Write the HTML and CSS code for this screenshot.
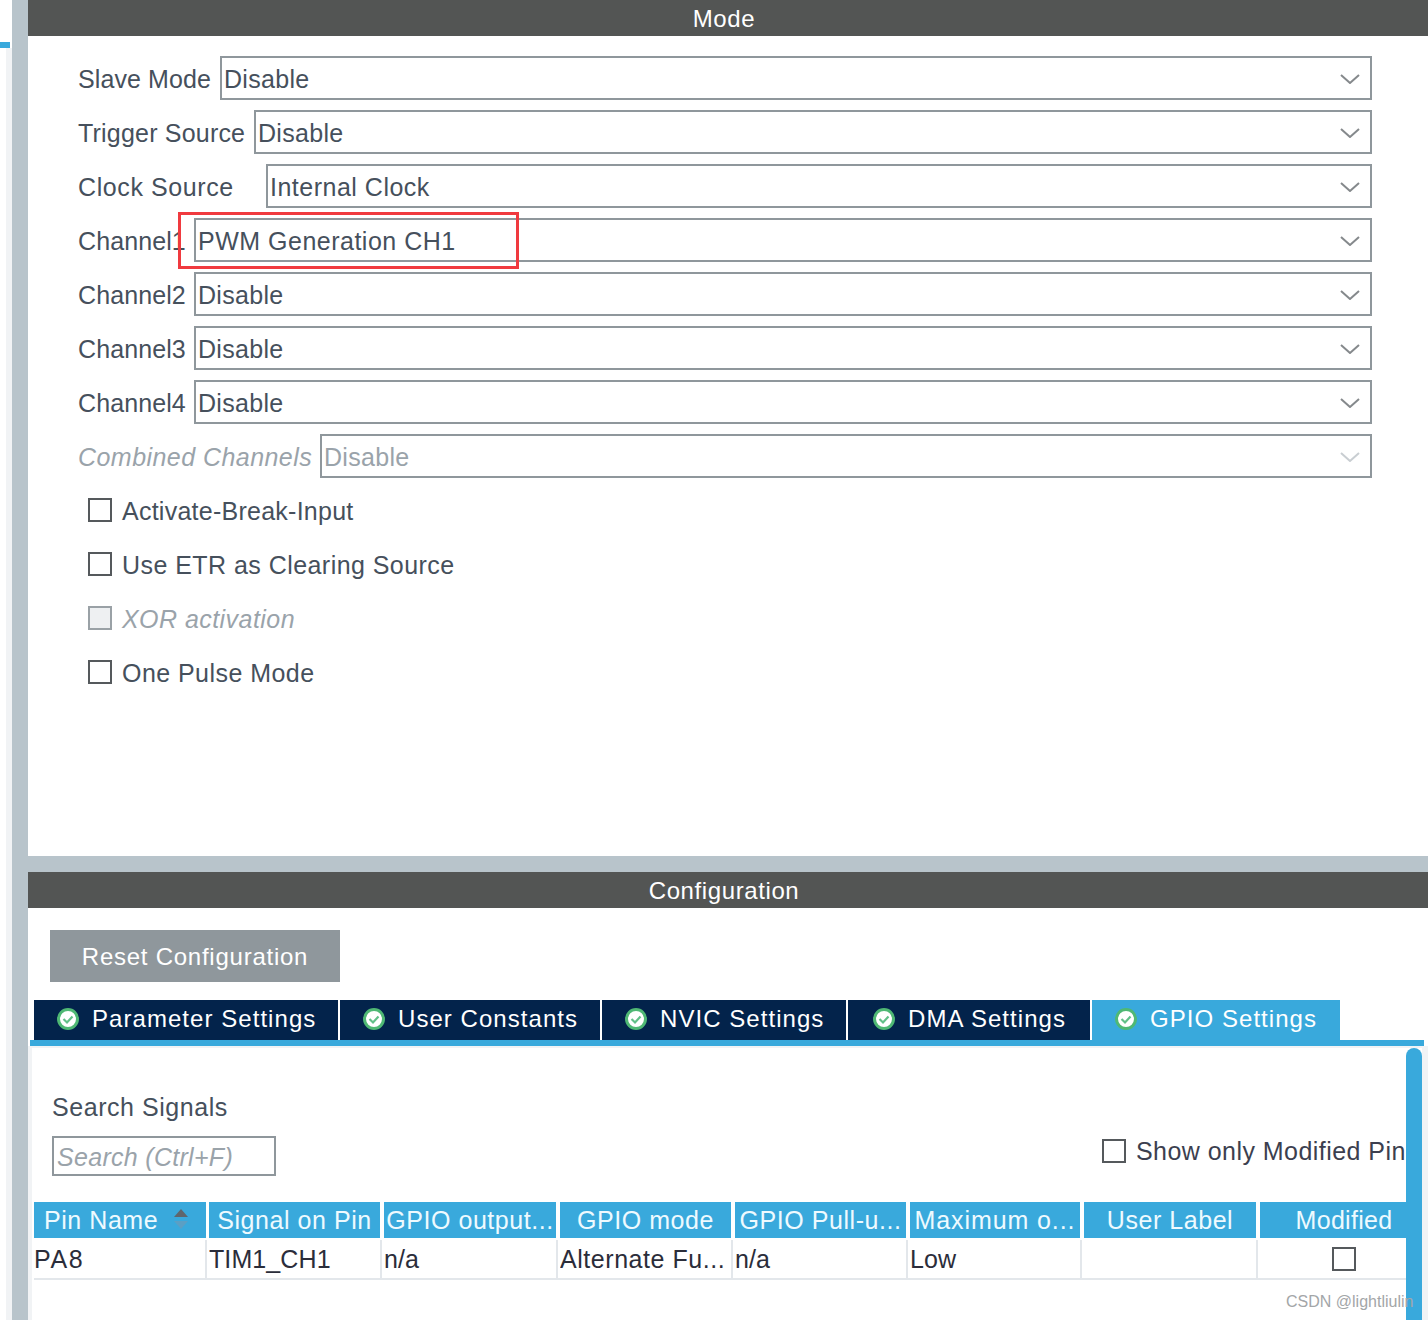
FILE: index.html
```html
<!DOCTYPE html>
<html lang="en">
<head>
    <meta charset="UTF-8">
    <title>TIM1 Mode and Configuration</title>
    <link rel="stylesheet" href="styles.css">
</head>
<body>
    <div class="rail">
        <div class="rail-left">
            <div class="rail-tab"></div>
            <div class="rail-strip"></div>
        </div>
        <div class="rail-sash"></div>
    </div>
    <div class="main">
        <section class="mode">
            <div class="title-bar">Mode</div>
            <div class="mode-body">
                <div class="field">
                    <label class="label w-slave">Slave Mode</label>
                    <div class="select"><span>Disable</span>
                        <svg class="chevron" viewBox="0 0 20 10"><path d="M1 1l9 8 9-8"/></svg>
                    </div>
                </div>
                <div class="field">
                    <label class="label w-trigger">Trigger Source</label>
                    <div class="select"><span>Disable</span>
                        <svg class="chevron" viewBox="0 0 20 10"><path d="M1 1l9 8 9-8"/></svg>
                    </div>
                </div>
                <div class="field">
                    <label class="label w-clock">Clock Source</label>
                    <div class="select"><span class="wide">Internal Clock</span>
                        <svg class="chevron" viewBox="0 0 20 10"><path d="M1 1l9 8 9-8"/></svg>
                    </div>
                </div>
                <div class="field">
                    <label class="label w-channel">Channel1</label>
                    <div class="select"><span class="wide">PWM Generation CH1</span>
                        <svg class="chevron" viewBox="0 0 20 10"><path d="M1 1l9 8 9-8"/></svg>
                    </div>
                    <div class="red-box"></div>
                </div>
                <div class="field">
                    <label class="label w-channel">Channel2</label>
                    <div class="select"><span>Disable</span>
                        <svg class="chevron" viewBox="0 0 20 10"><path d="M1 1l9 8 9-8"/></svg>
                    </div>
                </div>
                <div class="field">
                    <label class="label w-channel">Channel3</label>
                    <div class="select"><span>Disable</span>
                        <svg class="chevron" viewBox="0 0 20 10"><path d="M1 1l9 8 9-8"/></svg>
                    </div>
                </div>
                <div class="field">
                    <label class="label w-channel">Channel4</label>
                    <div class="select"><span>Disable</span>
                        <svg class="chevron" viewBox="0 0 20 10"><path d="M1 1l9 8 9-8"/></svg>
                    </div>
                </div>
                <div class="field disabled">
                    <label class="label w-combined">Combined Channels</label>
                    <div class="select"><span>Disable</span>
                        <svg class="chevron" viewBox="0 0 20 10"><path d="M1 1l9 8 9-8"/></svg>
                    </div>
                </div>
                <div class="check-row tight"><span class="box"></span><span class="check-text">Activate-Break-Input</span></div>
                <div class="check-row"><span class="box"></span><span class="check-text">Use ETR as Clearing Source</span></div>
                <div class="check-row disabled"><span class="box"></span><span class="check-text">XOR activation</span></div>
                <div class="check-row"><span class="box"></span><span class="check-text">One Pulse Mode</span></div>
            </div>
        </section>

        <div class="sash"></div>

        <section class="config">
            <div class="title-bar">Configuration</div>
            <div class="config-body">
                <button class="reset-btn">Reset Configuration</button>
                <div class="tabs">
                    <div class="tab w1"><svg class="ok" viewBox="0 0 22 22"><circle cx="11" cy="11" r="9.5"/><path d="M6.5 11l3.5 3.5 5.5-6"/></svg>Parameter Settings</div>
                    <div class="tab w2"><svg class="ok" viewBox="0 0 22 22"><circle cx="11" cy="11" r="9.5"/><path d="M6.5 11l3.5 3.5 5.5-6"/></svg>User Constants</div>
                    <div class="tab w3"><svg class="ok" viewBox="0 0 22 22"><circle cx="11" cy="11" r="9.5"/><path d="M6.5 11l3.5 3.5 5.5-6"/></svg>NVIC Settings</div>
                    <div class="tab w4"><svg class="ok" viewBox="0 0 22 22"><circle cx="11" cy="11" r="9.5"/><path d="M6.5 11l3.5 3.5 5.5-6"/></svg>DMA Settings</div>
                    <div class="tab w5 active"><svg class="ok" viewBox="0 0 22 22"><circle cx="11" cy="11" r="9.5"/><path d="M6.5 11l3.5 3.5 5.5-6"/></svg>GPIO Settings</div>
                </div>
                <div class="tab-line"></div>
                <div class="tab-content">
                    <div class="gpio">
                        <div class="search-label">Search Signals</div>
                        <div class="search-row">
                            <div class="search-input">Search (Ctrl+F)</div>
                            <div class="modified-check"><span class="box"></span><span>Show only Modified Pin</span></div>
                        </div>
                        <div class="grid">
                            <div class="head sort">Pin Name
                                <svg class="sort-icon" viewBox="0 0 16 22"><path class="up" d="M8 1l7 8H1z"/><path class="down" d="M1 13h14l-7 8z"/></svg>
                            </div>
                            <div class="head">Signal on Pin</div>
                            <div class="head">GPIO output...</div>
                            <div class="head">GPIO mode</div>
                            <div class="head">GPIO Pull-u...</div>
                            <div class="head long">Maximum o...</div>
                            <div class="head">User Label</div>
                            <div class="head last">Modified</div>
                            <div class="cell pin">PA8</div>
                            <div class="cell">TIM1_CH1</div>
                            <div class="cell">n/a</div>
                            <div class="cell mode-cell">Alternate Fu...</div>
                            <div class="cell">n/a</div>
                            <div class="cell">Low</div>
                            <div class="cell"></div>
                            <div class="cell center"><span class="box"></span></div>
                        </div>
                    </div>
                    <div class="scrollbar"></div>
                </div>
            </div>
        </section>
    </div>
    <div class="watermark">CSDN @lightliulin</div>
</body>
</html>
```

FILE: styles.css
```css
html, body {
    margin: 0;
    height: 1320px;
    overflow: hidden;
}
body {
    display: flex;
    width: 1428px;
    background: #fff;
    color: #46505c;
    font-family: "Liberation Sans", Arial, sans-serif;
    font-size: 25px;
    letter-spacing: 0.3px;
}
.rail {
    display: flex;
    width: 28px;
    flex: none;
}
.rail-left {
    display: flex;
    flex-direction: column;
    width: 12px;
}
.rail-tab {
    width: 10px;
    height: 6px;
    margin-top: 42px;
    background: #39a9dc;
}
.rail-strip {
    flex: 1;
    margin-left: 6px;
    background: #f1f3f5;
}
.rail-sash {
    width: 16px;
    background: #b8c4cb;
}
.main {
    flex: 1;
    display: flex;
    flex-direction: column;
    min-width: 0;
}
.title-bar {
    height: 36px;
    line-height: 37px;
    padding-right: 8px;
    background: #535554;
    color: #fff;
    text-align: center;
    font-size: 24px;
    letter-spacing: 0.6px;
}

/* mode panel */
.mode {
    height: 856px;
}
.mode-body {
    padding: 20px 56px 0 50px;
}
.field {
    display: flex;
    position: relative;
    height: 44px;
    margin-bottom: 10px;
    align-items: center;
}
.label {
    flex: none;
    padding-top: 2px;
    white-space: nowrap;
}
.w-slave { width: 142px; letter-spacing: 0.1px; }
.w-trigger { width: 176px; letter-spacing: 0.2px; }
.w-clock { width: 188px; letter-spacing: 0.6px; }
.w-channel { width: 116px; letter-spacing: 0.1px; }
.w-combined { width: 242px; letter-spacing: 0.45px; }
.select {
    flex: 1;
    height: 44px;
    box-sizing: border-box;
    border: 2px solid #8f979c;
    padding-left: 2px;
    display: flex;
    justify-content: space-between;
    align-items: center;
}
.select span {
    padding-top: 2px;
}
.select .wide {
    letter-spacing: 0.5px;
}
.chevron {
    width: 20px;
    height: 10px;
    margin: 1px 10px 0 0;
    fill: none;
    stroke: #85898c;
    stroke-width: 2;
}
.disabled .label,
.disabled .select span {
    color: #9aa3aa;
}
.disabled .label {
    font-style: italic;
}
.disabled .chevron {
    stroke: #c9ced2;
}
.red-box {
    position: absolute;
    left: 100px;
    top: -6px;
    width: 335px;
    height: 51px;
    border: 3px solid #f03a3f;
}
.check-row {
    display: flex;
    align-items: center;
    gap: 10px;
    height: 44px;
    margin-bottom: 10px;
    padding-left: 10px;
    letter-spacing: 0.45px;
}
.check-row.tight {
    letter-spacing: 0.25px;
}
.check-text {
    padding-top: 2px;
}
.box {
    display: inline-block;
    flex: none;
    width: 24px;
    height: 24px;
    box-sizing: border-box;
    border: 2px solid #55595c;
}
.check-row.disabled {
    color: #9aa3aa;
    font-style: italic;
}
.check-row.disabled .box {
    border-color: #9aa1a6;
    background: #eef0f2;
}

.sash {
    height: 16px;
    background: #b8c4cb;
}

/* configuration panel */
.config {
    flex: 1;
    min-height: 0;
    display: flex;
    flex-direction: column;
}
.config-body {
    flex: 1;
    min-height: 0;
    display: flex;
    flex-direction: column;
    padding-top: 22px;
}
.reset-btn {
    align-self: flex-start;
    width: 290px;
    height: 52px;
    margin-left: 22px;
    padding-top: 3px;
    border: none;
    background: #8f979c;
    color: #fff;
    font-family: inherit;
    font-size: 24px;
    letter-spacing: 0.75px;
}
.tabs {
    display: flex;
    gap: 2px;
    margin: 18px 0 0 6px;
}
.tab {
    height: 40px;
    display: flex;
    align-items: center;
    box-sizing: border-box;
    padding-left: 23px;
    gap: 13px;
    background: #03234b;
    color: #fff;
    font-size: 24px;
    letter-spacing: 1.05px;
    padding-bottom: 3px;
}
.tab.active {
    background: #39a9dc;
}
.w1 { width: 304px; }
.w2 { width: 260px; }
.w3 { width: 244px; }
.w4 { width: 242px; padding-left: 25px; }
.w5 { width: 248px; }
.ok {
    width: 22px;
    height: 22px;
    flex: none;
}
.ok circle {
    fill: #fff;
    stroke: #4fb874;
    stroke-width: 3;
}
.ok path {
    fill: none;
    stroke: #62c088;
    stroke-width: 2.2;
}
.tab-line {
    height: 6px;
    margin: 0 4px 0 2px;
    background: #39a9dc;
}
.tab-content {
    flex: 1;
    min-height: 0;
    display: flex;
    border-top: 2px solid #f1f3f5;
    border-left: 4px solid #f1f3f5;
    border-right: 6px solid #f1f3f5;
}
.gpio {
    flex: 1;
    min-width: 0;
    overflow: hidden;
    padding: 44px 0 0 2px;
}
.scrollbar {
    width: 16px;
    flex: none;
    background: #39a9dc;
    border-radius: 8px 8px 0 0;
}
.search-label {
    height: 30px;
    line-height: 30px;
    margin-left: 18px;
    letter-spacing: 0.55px;
}
.search-row {
    display: flex;
    justify-content: space-between;
    margin: 14px 0 0 18px;
    height: 40px;
}
.search-input {
    width: 224px;
    box-sizing: border-box;
    border: 2px solid #8f979c;
    padding-left: 3px;
    line-height: 38px;
    color: #9aa3aa;
    font-style: italic;
}
.modified-check {
    display: flex;
    align-items: center;
    gap: 10px;
    height: 30px;
    width: 304px;
    flex: none;
    white-space: nowrap;
    letter-spacing: 0.45px;
    color: #3c3f4f;
}
.grid {
    display: grid;
    grid-template-columns: 175px 175px 176px 175px 175px 174px 176px 168px;
    margin-top: 26px;
}
.head {
    height: 36px;
    line-height: 37px;
    margin: 0 4px 2px 0;
    background: #39a9dc;
    color: #eefaff;
    text-align: center;
    white-space: nowrap;
    overflow: hidden;
    letter-spacing: 0.55px;
}
.head.long {
    letter-spacing: 0.9px;
}
.head.last {
    margin-right: 0;
    letter-spacing: 0.3px;
}
.sort {
    position: relative;
    margin-right: 3px;
    text-align: left;
    padding-left: 10px;
}
.sort-icon {
    position: absolute;
    right: 17px;
    top: 6px;
    width: 16px;
    height: 22px;
}
.sort-icon .up { fill: #5f666c; }
.sort-icon .down { fill: #5b9fc4; }
.cell {
    height: 38px;
    line-height: 38px;
    border-bottom: 2px solid #e3e7eb;
    background: linear-gradient(#e3e7eb, #e3e7eb) no-repeat right 2px top 0 / 2px 100%;
    white-space: nowrap;
    overflow: hidden;
    color: #2b2d3a;
    letter-spacing: 0.1px;
}
.cell.pin {
    letter-spacing: 1.6px;
}
.cell.mode-cell {
    letter-spacing: 0.55px;
}
.cell.center {
    display: flex;
    justify-content: center;
    align-items: center;
    background: none;
}
.watermark {
    position: absolute;
    left: 1286px;
    top: 1293px;
    color: #a3a6a8;
    font-size: 16px;
    letter-spacing: 0;
    white-space: nowrap;
}
```
